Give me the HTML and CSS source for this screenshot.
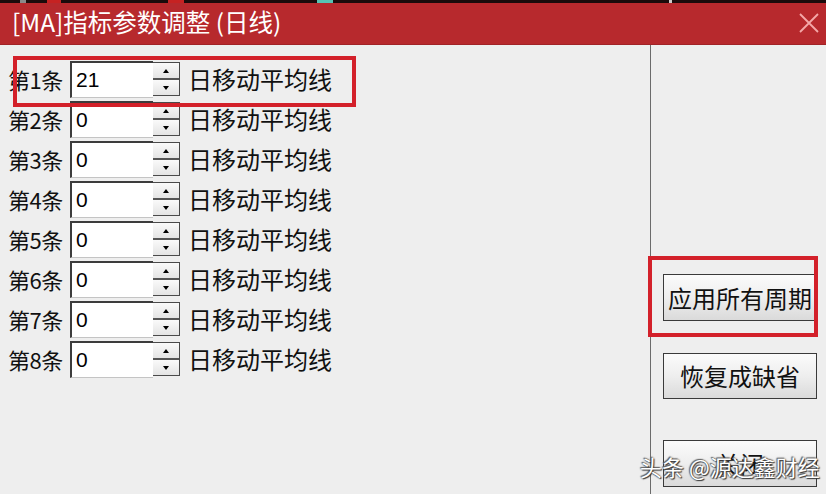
FILE: index.html
```html
<!DOCTYPE html>
<html lang="zh-CN">
<head>
<meta charset="utf-8">
<title>[MA]指标参数调整 (日线)</title>
<link rel="stylesheet" href="styles.css">
</head>
<body>
<div class="window">
  <div class="topstrip"></div>
  <div class="titlebar">
    <span class="title">[MA]指标参数调整 (日线)</span>
    <svg class="close" width="20" height="20" viewBox="0 0 20 20"><path d="M1 1 L19 19 M19 1 L1 19" stroke="#f4a8a8" stroke-width="1.8" fill="none"/></svg>
  </div>
  <div class="main">
    <div class="params">
      <div class="row"><span class="label">第1条</span><span class="input">21</span><span class="spin"><span class="half"><i class="up"></i></span><span class="half"><i class="down"></i></span></span><span class="unit">日移动平均线</span></div>
      <div class="row"><span class="label">第2条</span><span class="input">0</span><span class="spin"><span class="half"><i class="up"></i></span><span class="half"><i class="down"></i></span></span><span class="unit">日移动平均线</span></div>
      <div class="row"><span class="label">第3条</span><span class="input">0</span><span class="spin"><span class="half"><i class="up"></i></span><span class="half"><i class="down"></i></span></span><span class="unit">日移动平均线</span></div>
      <div class="row"><span class="label">第4条</span><span class="input">0</span><span class="spin"><span class="half"><i class="up"></i></span><span class="half"><i class="down"></i></span></span><span class="unit">日移动平均线</span></div>
      <div class="row"><span class="label">第5条</span><span class="input">0</span><span class="spin"><span class="half"><i class="up"></i></span><span class="half"><i class="down"></i></span></span><span class="unit">日移动平均线</span></div>
      <div class="row"><span class="label">第6条</span><span class="input">0</span><span class="spin"><span class="half"><i class="up"></i></span><span class="half"><i class="down"></i></span></span><span class="unit">日移动平均线</span></div>
      <div class="row"><span class="label">第7条</span><span class="input">0</span><span class="spin"><span class="half"><i class="up"></i></span><span class="half"><i class="down"></i></span></span><span class="unit">日移动平均线</span></div>
      <div class="row"><span class="label">第8条</span><span class="input">0</span><span class="spin"><span class="half"><i class="up"></i></span><span class="half"><i class="down"></i></span></span><span class="unit">日移动平均线</span></div>
    </div>
    <div class="actions">
      <button class="btn btn-apply">应用所有周期</button>
      <button class="btn btn-reset">恢复成缺省</button>
      <button class="btn btn-close">关闭</button>
    </div>
  </div>
  <div class="hl hl-row"></div>
  <div class="hl hl-btn"></div>
  <div class="watermark">头条 @源达鑫财经</div>
</div>
</body>
</html>
```

FILE: styles.css
```css
body {
  margin: 0;
  background: #eeeeee;
}

.window {
  width: 826px;
  height: 494px;
  position: relative;
  overflow: hidden;
  background: #eeeeee;
  font-family: "Noto Sans CJK SC", "Noto Sans", sans-serif;
  color: #111;
}

.topstrip {
  height: 3px;
  background: linear-gradient(to right,
    #1a0b0b 0 20px, #8a8a8a 20px 26px, #1a0b0b 26px 47px,
    #c62222 47px 61px, #1a0b0b 61px 168px,
    #c62222 168px 184px, #1a0b0b 184px 317px,
    #55c4b4 317px 333px, #1a0b0b 333px 669px,
    #cccccc 669px 672px, #1a0b0b 672px);
}

.titlebar {
  height: 42px;
  background: #b7292d;
  display: flex;
  align-items: center;
  justify-content: space-between;
  padding: 0 7px 2px 12px;
  box-sizing: border-box;
  border-bottom: 1px solid #a12327;
}

.title {
  color: #ffffff;
  font-size: 24.5px;
  line-height: 1;
  white-space: nowrap;
}

.close {
  display: block;
}

.main {
  display: flex;
  height: 449px;
}

.params {
  width: 651px;
  box-sizing: border-box;
  border-right: 1px solid #6b6b6b;
  padding-top: 14px;
}

.row {
  display: flex;
  align-items: center;
  height: 40px;
}

.label {
  width: 70px;
  box-sizing: border-box;
  padding-left: 8px;
  font-size: 22px;
  line-height: 1;
  white-space: nowrap;
  letter-spacing: -0.5px;
}

.input {
  width: 83px;
  height: 37px;
  box-sizing: border-box;
  background: #ffffff;
  border-top: 2px solid #3c3c3c;
  border-left: 2px solid #3c3c3c;
  border-bottom: 1px solid #c4c4c4;
  padding-left: 4px;
  display: flex;
  align-items: center;
  font-family: "Liberation Sans", Arial, sans-serif;
  font-size: 21px;
  color: #000;
}

.spin {
  width: 27px;
  height: 34px;
  box-sizing: border-box;
  border: 1px solid #4a4a4a;
  border-left: none;
  display: flex;
  flex-direction: column;
  background: #efefef;
}

.half {
  flex: 1;
  display: flex;
  align-items: center;
  justify-content: center;
  background: linear-gradient(#fafafa, #e4e4e4);
}

.half + .half {
  border-top: 2px solid #555555;
}

.up {
  width: 0;
  height: 0;
  border-left: 3px solid transparent;
  border-right: 3px solid transparent;
  border-bottom: 4px solid #000;
}

.down {
  width: 0;
  height: 0;
  border-left: 3px solid transparent;
  border-right: 3px solid transparent;
  border-top: 4px solid #000;
}

.unit {
  margin-left: 8px;
  font-size: 24px;
  line-height: 1;
  white-space: nowrap;
}

.actions {
  flex: 1;
  display: flex;
  flex-direction: column;
  align-items: flex-start;
  padding-left: 12px;
  padding-top: 229px;
}

.btn {
  width: 154px;
  height: 47px;
  box-sizing: border-box;
  border: 1px solid #3a3a3a;
  background: linear-gradient(#fbfbfb 0%, #eeeeee 50%, #dadada 100%);
  font-family: "Noto Sans CJK SC", sans-serif;
  font-size: 24px;
  color: #111;
  padding: 0;
  margin: 0;
  display: flex;
  align-items: center;
  justify-content: center;
  line-height: 1;
}

.btn-reset {
  height: 46px;
  margin-top: 32px;
}

.btn-close {
  margin-top: 41px;
}

.hl {
  position: absolute;
  box-sizing: border-box;
  border: 4px solid #d3202a;
}

.hl-row {
  left: 13px;
  top: 56px;
  width: 343px;
  height: 51px;
}

.hl-btn {
  left: 648px;
  top: 256px;
  width: 170px;
  height: 81px;
}

.watermark {
  position: absolute;
  left: 640px;
  top: 455px;
  font-size: 22px;
  line-height: 1;
  color: #ffffff;
  white-space: nowrap;
  text-shadow: 0 0 2px #444, 1px 1px 1px #333, -1px -1px 1px #666;
}
```
